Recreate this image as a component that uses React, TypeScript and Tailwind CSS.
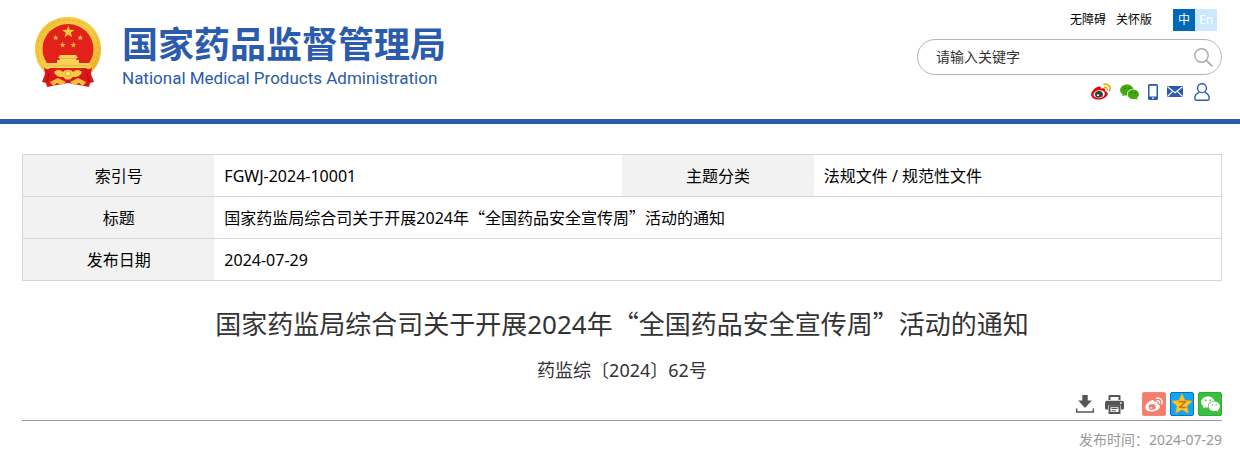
import type { ReactNode } from "react";

const star = (cx: number, cy: number, r: number, inner = 0.4) =>
  Array.from({ length: 10 }, (_, i) => {
    const a = (Math.PI / 5) * i - Math.PI / 2;
    const d = i % 2 ? r * inner : r;
    return `${(cx + d * Math.cos(a)).toFixed(2)},${(cy + d * Math.sin(a)).toFixed(2)}`;
  }).join(" ");

function Emblem() {
  return (
    <svg className="h-[71px] w-[66px] shrink-0" viewBox="0 0 66 71" aria-hidden="true">
      <defs>
        <linearGradient id="gold" x1="0" y1="0" x2="1" y2="1">
          <stop offset="0" stopColor="#f3bd33" />
          <stop offset="0.5" stopColor="#f8cd48" />
          <stop offset="1" stopColor="#e9ad25" />
        </linearGradient>
      </defs>
      {/* Wreath */}
      <path
        d="M33 0C51 0 66 13.500 66 32C66 42 62 51 55 56L33 60L11 56C4 51 0 42 0 32C0 13.500 15 0 33 0Z"
        fill="url(#gold)"
      />
      <path
        d="M8 50C-1 36 1 14 19 6C28 2 38 2 47 6C65 14 67 36 58 50"
        fill="none"
        stroke="#dd9d1d"
        strokeWidth="0.800"
        strokeDasharray="3 2"
        opacity="0.600"
      />
      <ellipse cx="33" cy="32" rx="25.500" ry="25" fill="#e2211b" />
      {/* Drapes */}
      <path
        d="M9 50C11 53 14 53 16 50C20 53 25 55 29 53H37C41 55 46 53 50 50C52 53 55 53 57 50L56 57L59 65L55 66L54 70L44 68L33 66L22 68L12 70L11 66L7 65L10 57Z"
        fill="#d9161a"
      />
      <polygon points={star(33.3, 15, 6.6)} fill="#f9c935" />
      <polygon points={star(20.7, 20.7, 3.2)} fill="#f3b93a" />
      <polygon points={star(45.3, 20.7, 3.2)} fill="#f3b93a" />
      <polygon points={star(27.7, 28, 3.2)} fill="#f3b93a" />
      <polygon points={star(38.3, 28, 3.2)} fill="#f3b93a" />
      {/* Gate */}
      <path d="M25 38H41L43 41H41.500V43H44V46H54.500V48.500H56V51H10V48.500H11.500V46H22V43H24.500V41H23Z" fill="#f9d357" />
      <path d="M25 41.500H41M11.500 48.700H54.500" stroke="#e39a2a" strokeWidth="0.600" />
      {/* Cogwheel and ribbons */}
      <path d="M19 55C23 52 26 53 28 55C30 52 36 52 38 55C40 53 43 52 47 55C45 60 41 60 38 60L35 62.500H31L28 60C25 60 21 60 19 55Z" fill="#f7ca42" />
      <circle cx="33" cy="56.500" r="2.600" fill="#fbe17c" stroke="#e0a127" strokeWidth="0.800" />
      <path d="M15 65L23 61L31 65L27 68L22 66L18 69ZM51 65L43 61L35 65L39 68L44 66L48 69Z" fill="#f3bf38" />
      <path d="M14 56L12 65M52 56L54 65" stroke="#a90f14" strokeWidth="1" />
    </svg>
  );
}

function WeiboIcon({ className, body, pupil, wave }: { className: string; body: string; pupil: string; wave: string }) {
  return (
    <svg className={className} viewBox="0 0 20 17" aria-hidden="true">
      <path
        d="M7.600 3.600C9.300 2.900 10.300 4 9.900 5.600C11.800 4.900 14.200 4.700 14 7.100C13.950 7.600 13.700 8 14.200 8.200C18 9.300 17 12.500 14.600 14.300C11 17.100 4.500 17.400 1.500 14.700C-1 12.300 .2 9 2.600 6.700C4.100 5.200 5.900 4.200 7.600 3.600Z"
        fill={body}
      />
      <ellipse cx="8.200" cy="11.200" rx="5.700" ry="3.900" transform="rotate(-6 8.200 11.200)" fill="#fff" />
      <ellipse cx="8" cy="11.300" rx="4" ry="3.300" transform="rotate(-12 8 11.300)" fill={pupil} />
      <ellipse cx="7" cy="12.200" rx="1.100" ry="0.900" fill="#fff" />
      <path d="M13.500 4.200C15.600 3.800 16.700 5.200 16.200 7" fill="none" stroke={wave} strokeWidth="1.400" strokeLinecap="round" />
      <path d="M13 1.300C17 .4 20 3.700 18.700 7.600" fill="none" stroke={wave} strokeWidth="1.700" strokeLinecap="round" />
    </svg>
  );
}

function WechatIcon({ className, fill, eye }: { className: string; fill: string; eye: string }) {
  return (
    <svg className={className} viewBox="0 0 20 17" aria-hidden="true">
      <path d="M7.200.500C3.200.500 0 3.100 0 6.400C0 8.300 1 9.900 2.700 11L2 13.200L4.600 11.900Q6 12.300 7.500 12.200C6.500 8.200 9.600 5.200 14.100 5.200C13.600 2.500 10.700.500 7.200.500Z" fill={fill} />
      <path d="M14 5.900C10.600 5.900 8 8.200 8 11C8 13.900 10.600 16.100 14 16.100Q15.200 16.100 16.200 15.700L18.400 16.800L17.800 14.900C19.200 14 20 12.600 20 11C20 8.200 17.300 5.900 14 5.900Z" fill={fill} />
      <g fill={eye}>
        <circle cx="4.900" cy="4.500" r="0.900" />
        <circle cx="9.600" cy="4.500" r="0.900" />
        <circle cx="12" cy="9.400" r="0.800" />
        <circle cx="16" cy="9.400" r="0.800" />
      </g>
    </svg>
  );
}

function PhoneIcon() {
  return (
    <svg className="h-4 w-[10px]" viewBox="0 0 10 16" aria-hidden="true">
      <rect width="10" height="16" rx="1.500" fill="#2b5bac" />
      <rect x="1.500" y="1.800" width="7" height="10.700" fill="#fff" />
      <rect x="4" y="13.500" width="2" height="1.200" fill="#fff" />
    </svg>
  );
}

function MailIcon() {
  return (
    <svg className="h-[11px] w-4" viewBox="0 0 16 11" aria-hidden="true">
      <rect width="16" height="11" fill="#2b5bac" />
      <path d="M.5.700L8 6.800L15.500.700M.500 10.500L5.700 5.400M15.500 10.500L10.300 5.400" fill="none" stroke="#fff" strokeWidth="1.100" />
    </svg>
  );
}

function UserIcon() {
  return (
    <svg className="h-[18px] w-4" viewBox="0 0 16 18" fill="none" stroke="#2b5bac" strokeWidth="1.400" aria-hidden="true">
      <circle cx="8" cy="5.200" r="4.400" />
      <path d="M5.300 9.400C2.500 10.300.800 12.500.800 15.500C.800 16.700 1.300 17.200 2.300 17.200H13.700C14.700 17.200 15.200 16.700 15.200 15.500C15.200 12.500 13.500 10.300 10.700 9.400" />
    </svg>
  );
}

function SearchIcon() {
  return (
    <svg className="size-[19px]" viewBox="0 0 19 19" fill="none" stroke="#aaa" strokeWidth="1.400" aria-hidden="true">
      <circle cx="7.500" cy="7.500" r="6.700" />
      <path d="M12.300 12.300L18.300 18.300" strokeWidth="1.700" />
    </svg>
  );
}

function DownloadIcon() {
  return (
    <svg className="h-[18px] w-[18px]" viewBox="0 0 18 18" aria-hidden="true">
      <path d="M6.300 0H11.700V5.500H15.800L9 13L2.200 5.500H6.300Z" fill="#555" />
      <path d="M.7 13.500V17H17.300V13.500" fill="none" stroke="#555" strokeWidth="1.400" />
    </svg>
  );
}

function PrintIcon() {
  return (
    <svg className="h-[19px] w-[19px]" viewBox="0 0 19 19" aria-hidden="true">
      <path d="M3.500 5V1Q3.500 0 4.500 0H14.500Q15.500 0 15.500 1V5H13.500V2H5.500V5Z" fill="#555" />
      <path d="M2 5.700H17Q19 5.700 19 7.700V13Q19 14.500 17.500 14.500H16V10.500H3V14.500H1.500Q0 14.500 0 13V7.700Q0 5.700 2 5.700Z" fill="#555" />
      <circle cx="15.800" cy="8.100" r="0.900" fill="#fff" />
      <path d="M4.500 11.300H14.500V18H4.500Z" fill="#fff" stroke="#555" strokeWidth="1.900" />
      <path d="M6.500 13.500H12.500M6.500 15.700H11" stroke="#555" strokeWidth="1.100" />
    </svg>
  );
}

function QzoneIcon() {
  return (
    <svg className="size-[22px]" viewBox="0 0 22 22" aria-hidden="true">
      <polygon points={star(11, 11.5, 10.8, 0.47)} fill="#fdc928" stroke="#eda916" strokeWidth="0.800" strokeLinejoin="round" />
      <path d="M7.500 8.800Q11 8 14.300 8.800L8.800 14Q12 14.900 15 14.200" fill="none" stroke="#c9741a" strokeWidth="1.500" />
    </svg>
  );
}

// Keeps quotation marks at full width inside mixed text
function Quoted({ children }: { children: ReactNode }) {
  return (
    <>
      <span className="font-['Noto_Sans_CJK_SC',sans-serif]">“</span>
      {children}
      <span className="font-['Noto_Sans_CJK_SC',sans-serif]">”</span>
    </>
  );
}

function NoticeTitle() {
  return (
    <>
      国家药监局综合司关于开展2024年<Quoted>全国药品安全宣传周</Quoted>活动的通知
    </>
  );
}

function Header() {
  return (
    <header className="flex items-start justify-between border-b-[5px] border-[#2b5bac] pr-[18px] pb-[18px] pl-[35px]">
      <a href="#" className="mt-[17px] flex items-start gap-[21px] text-[#2b5bac]">
        <Emblem />
        <span className="flex flex-col pt-1 whitespace-nowrap">
          <span className="text-[36px] leading-[48px] font-bold">国家药品监督管理局</span>
          <span className="font-[Roboto,sans-serif] text-[17px] leading-[18px]">
            National Medical Products Administration
          </span>
        </span>
      </a>

      <div className="flex w-[305px] flex-col">
        <div className="mt-[9px] flex h-[22px] items-center justify-end pr-[5px] text-xs">
          <a href="#" className="mr-[10px]">无障碍</a>
          <a href="#" className="mr-[21px]">关怀版</a>
          <a href="#" className="h-[22px] w-[22px] bg-[#0068b7] text-center leading-[22px] text-white">中</a>
          <a href="#" className="h-[22px] w-[22px] bg-[#cce8ff] text-center leading-[22px] text-white">En</a>
        </div>
        <form className="mt-2 flex h-9 items-center rounded-full border border-[#b5b5b5] pr-2 pl-[18px]">
          <input
            type="text"
            aria-label="请输入关键字"
            placeholder="请输入关键字"
            className="min-w-0 flex-1 text-sm outline-none placeholder:text-[#333]"
          />
          <button type="button" aria-label="搜索">
            <SearchIcon />
          </button>
        </form>
        <div className="mt-[7px] flex h-[19px] items-center justify-end pr-3">
          <a href="#" aria-label="微博" className="mr-[9px]">
            <WeiboIcon className="h-[17px] w-5" body="#e6070c" pupil="#3c3c3c" wave="#f0a30a" />
          </a>
          <a href="#" aria-label="微信" className="mr-[9px]">
            <WechatIcon className="h-4 w-[19px]" fill="#46a810" eye="#23700a" />
          </a>
          <a href="#" aria-label="手机版" className="mr-[9px]"><PhoneIcon /></a>
          <a href="#" aria-label="邮箱" className="mr-[11px]"><MailIcon /></a>
          <a href="#" aria-label="个人中心"><UserIcon /></a>
        </div>
      </div>
    </header>
  );
}

function InfoTable() {
  const label = "h-[42px] w-[16%] bg-[#f2f2f2] text-center font-normal";
  const value = "px-[10px] text-left";
  const row = "border border-[#d6d6d6]";

  return (
    <table className="w-full table-fixed border-collapse text-base text-black">
      <tbody>
        <tr className={row}>
          <th scope="row" className={label}>索引号</th>
          <td className={value}>FGWJ-2024-10001</td>
          <th scope="row" className={label}>主题分类</th>
          <td className={value}>法规文件 / 规范性文件</td>
        </tr>
        <tr className={row}>
          <th scope="row" className={label}>标题</th>
          <td colSpan={3} className={value}><NoticeTitle /></td>
        </tr>
        <tr className={row}>
          <th scope="row" className={label}>发布日期</th>
          <td colSpan={3} className={value}>2024-07-29</td>
        </tr>
      </tbody>
    </table>
  );
}

function Toolbar() {
  const share = "flex size-6 items-center justify-center rounded-[2px] border";

  return (
    <div className="mt-2 flex items-center justify-end border-b border-[#999] pb-1">
      <button type="button" aria-label="下载" className="mr-[11px]"><DownloadIcon /></button>
      <button type="button" aria-label="打印" className="mr-[18px]"><PrintIcon /></button>
      <div className="flex gap-1">
        <a href="#" aria-label="分享到微博" className={`${share} border-[#f08878] bg-[#f67c6c]`}>
          <WeiboIcon className="h-[15px] w-[18px]" body="#fff" pupil="#f67c6c" wave="#fff" />
        </a>
        <a href="#" aria-label="分享到QQ空间" className={`${share} border-[#0b6fc0] bg-[#12a5f4]`}>
          <QzoneIcon />
        </a>
        <a href="#" aria-label="分享到微信" className={`${share} border-[#2fae37] bg-[#3ac03f]`}>
          <WechatIcon className="h-4 w-[19px]" fill="#fff" eye="#3ac03f" />
        </a>
      </div>
    </div>
  );
}

export default function App() {
  return (
    <div lang="zh-CN" className="min-h-screen bg-white font-['Noto_Sans','Noto_Sans_CJK_SC',sans-serif] text-black">
      <Header />
      <main className="pt-[30px] pr-[18px] pl-[22px]">
        <InfoTable />
        <h1 className="mt-[23px] text-center text-[26px] leading-[38px] text-[#333]">
          <NoticeTitle />
        </h1>
        <p className="mt-[13px] text-center text-lg leading-7 text-[#333]">药监综〔2024〕62号</p>
        <Toolbar />
        <p className="mt-[9px] text-right text-sm leading-5 text-[#999]">发布时间：2024-07-29</p>
      </main>
    </div>
  );
}
